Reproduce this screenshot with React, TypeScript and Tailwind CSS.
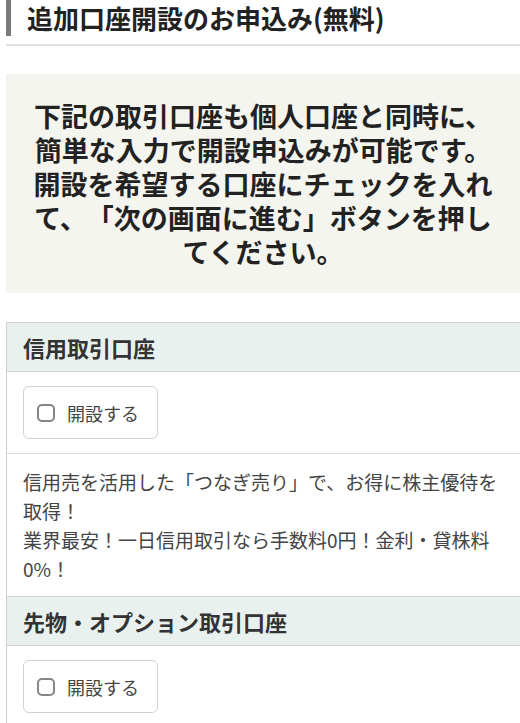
import React from 'react';

const FONT = "font-['Noto_Sans_CJK_JP','Noto_Sans',sans-serif]";

interface Section {
  title: string;
  lines?: string[];
}

const SECTIONS: Section[] = [
  {
    title: '信用取引口座',
    lines: [
      '信用売を活用した「つなぎ売り」で、お得に株主優待を取得！',
      '業界最安！一日信用取引なら手数料0円！金利・貸株料0%！',
    ],
  },
  { title: '先物・オプション取引口座' },
];

function OpenCheck() {
  return (
    <label className="inline-flex items-center h-[53px] pl-[13px] pr-[18px] border border-[#d2d2d2] rounded-[6px] bg-white cursor-pointer">
      <span className="block shrink-0 w-[18px] h-[18px] border-2 border-[#858585] rounded-[5px] bg-white" />
      <span className="ml-[12px] text-[18px] leading-none text-[#444]">開設する</span>
    </label>
  );
}

export default function App() {
  return (
    <div className={`${FONT} [text-spacing-trim:space-all] bg-white min-h-screen text-[#222]`}>
      <h2 className="ml-[6px] pb-[8px] border-b-2 border-[#e0e0e0] flex items-center">
        <span className="w-[5px] h-[36px] bg-[#7a7a7a]" />
        <span className="ml-[16px] text-[26px] font-bold leading-none">
          追加口座開設のお申込み(無料)
        </span>
      </h2>

      <div className="ml-[6px] mt-[28px] bg-[#f5f5ef] px-[27px] pt-[25px] pb-[24px] text-center text-[27px] font-bold leading-[34px] text-[#222]">
        下記の取引口座も個人口座と同時に、簡単な入力で開設申込みが可能です。開設を希望する口座にチェックを入れて、「次の画面に進む」ボタンを押してください。
      </div>

      <div className="ml-[6px] mt-[29px] border-l border-[#d0d0d0]">
        {SECTIONS.map((s) => (
          <div key={s.title}>
            <div className="h-[50px] flex items-center px-[16px] bg-[#e9f1ee] border-y border-[#d0d0d0] text-[22px] font-bold text-[#333]">
              {s.title}
            </div>
            <div className="px-[16px] py-[14px] border-b border-[#d8d8d8]">
              <OpenCheck />
            </div>
            {s.lines && (
              <div className="px-[16px] pr-[14px] py-[13px] text-[19px] leading-[29px] text-[#444]">
                {s.lines.map((l) => (
                  <p key={l}>{l}</p>
                ))}
              </div>
            )}
          </div>
        ))}
      </div>
    </div>
  );
}
